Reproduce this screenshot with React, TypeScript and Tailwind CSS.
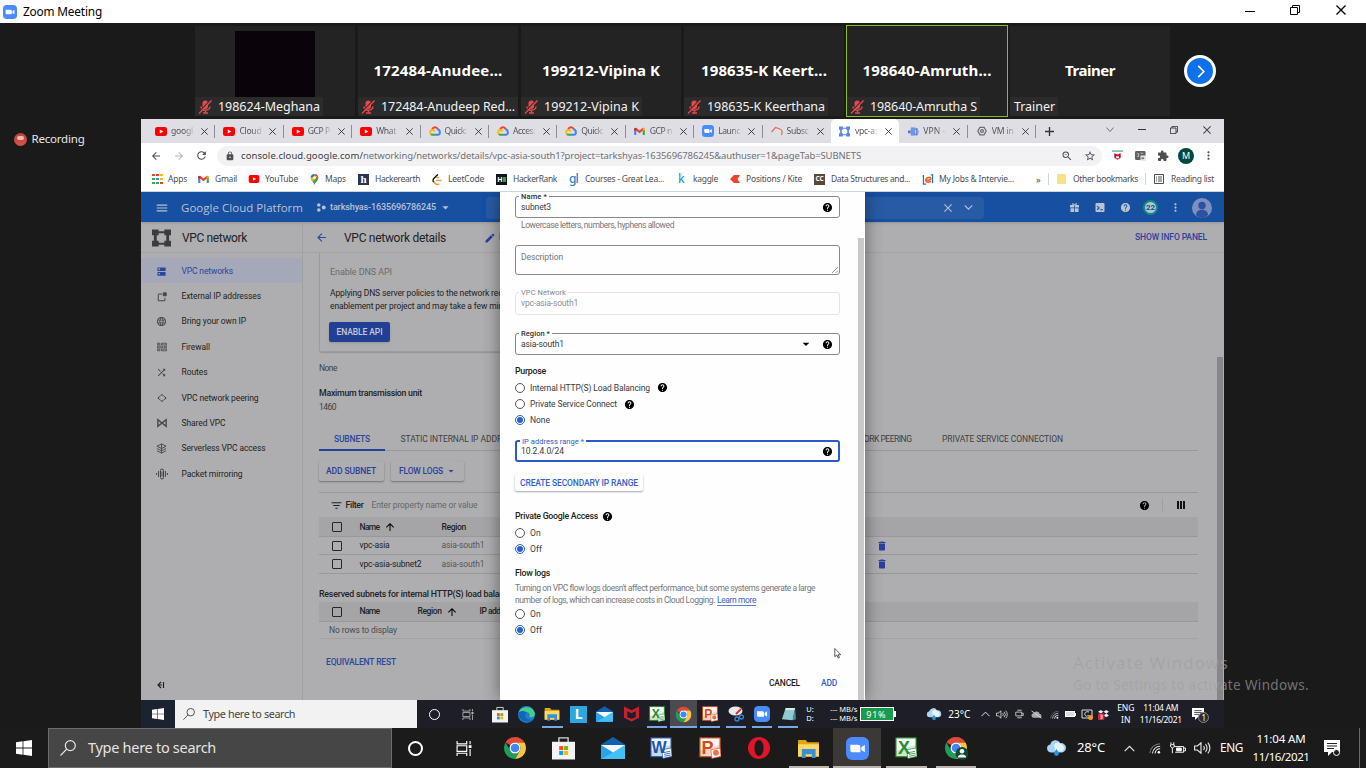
import React, { useLayoutEffect, useRef } from "react";
import {
  MdArrowBack, MdArrowDropDown, MdArrowForward, MdArrowUpward, MdDelete, MdDns, MdEdit,
  MdExtension, MdFilterList, MdHelp, MdLock, MdMenu, MdMoreVert, MdRefresh, MdStarBorder,
  MdZoomOut, MdShuffle, MdLanguage,
} from "react-icons/md";

const UI = "font-['Noto_Sans','Segoe_UI',sans-serif]";

/* One line of text whose tracking is set so that it fills the width of its box. */
function Fit({ className, children }: { className: string; children: string }) {
  const box = useRef<HTMLSpanElement>(null);
  const text = useRef<HTMLSpanElement>(null);
  useLayoutEffect(() => {
    const b = box.current, t = text.current;
    if (!b || !t) return;
    t.style.letterSpacing = "0px";
    const gap = b.getBoundingClientRect().width - t.getBoundingClientRect().width;
    t.style.letterSpacing = `${gap / children.length}px`;
  }, [children]);
  return (
    <span ref={box} className={`inline-block shrink-0 whitespace-nowrap ${className}`}>
      <span ref={text}>{children}</span>
    </span>
  );
}

type P = { className?: string };

const ZoomLogo = ({ className = "" }: P) => (
  <svg viewBox="0 0 24 24" className={`shrink-0 ${className}`}>
    <rect width="24" height="24" rx="6.5" fill="#4a8cff" />
    <path d="M4.5 8h8.2a2.3 2.3 0 0 1 2.3 2.3V16H6.8a2.3 2.3 0 0 1-2.3-2.3zM16 10.6 19.6 8v8L16 13.5z" fill="#fff" />
  </svg>
);
const Chrome = ({ className = "", badge = false }: P & { badge?: boolean }) => (
  <svg viewBox="0 0 48 48" className={`shrink-0 ${className}`}>
    <path d="M24 2a22 22 0 0 1 19.05 11H24a11 11 0 0 0-9.53 5.5L4.95 13A22 22 0 0 1 24 2z" fill="#e0493b" />
    <path d="M43.05 13A22 22 0 0 1 24 46l9.53-16.5A11 11 0 0 0 24 13z" fill="#fdc63a" />
    <path d="M4.95 13A22 22 0 0 0 24 46l9.53-16.5a11 11 0 0 1-19.06 0z" fill="#1f9d58" />
    <circle cx="24" cy="24" r="11" fill="#fff" />
    <circle cx="24" cy="24" r="8.6" fill="#4285f4" />
    {badge && (
      <g>
        <circle cx="36" cy="35" r="13" fill="#0f4a33" />
        <circle cx="36" cy="30.5" r="4.5" fill="#fff" />
        <path d="M27.5 43c0-8 17-8 17 0z" fill="#fff" />
      </g>
    )}
  </svg>
);
const Store = ({ className = "" }: P) => (
  <svg viewBox="0 0 24 24" className={`shrink-0 ${className}`}>
    <path d="M7.2 6V1.4h9.6V6" fill="none" stroke="#d8d8d8" strokeWidth="1.4" />
    <path d="M0 5.5h24V24H0z" fill="#f3f3f3" />
    <path d="M7.5 10h4.2v4.2H7.5z" fill="#f25022" /><path d="M12.6 10h4.2v4.2h-4.2z" fill="#7fba00" />
    <path d="M7.5 15.1h4.2v4.2H7.5z" fill="#00a4ef" /><path d="M12.6 15.1h4.2v4.2h-4.2z" fill="#ffb900" />
  </svg>
);
const Mail = ({ className = "" }: P) => (
  <svg viewBox="0 0 24 22" className={`shrink-0 ${className}`}>
    <path d="M12 0 24 7.5V22H0V7.5z" fill="#0f62ab" />
    <path d="m0 8 12 7.5L24 8v14H0z" fill="#2aa3ee" />
    <path d="M24 8v14H0l12-6.5z" fill="#45c0f5" />
    <path d="M0 8h24l-12 7.5z" fill="#f4f8fb" />
  </svg>
);
const Office = ({ className = "", letter, color }: { className?: string; letter: string; color: "w" | "p" | "x" }) => {
  const ink = color === "w" ? "#1e55a5" : color === "p" ? "#d24a1d" : "#2a8a38";
  const glass = color === "w" ? "#c3daf3" : color === "p" ? "#f9d3c2" : "#cbe9c4";
  return (
    <span className={`relative inline-flex shrink-0 items-center justify-center ${className}`}>
      <svg viewBox="0 0 24 24" className="absolute inset-0 h-full w-full">
        <rect x="1" y="1" width="22" height="20.5" fill={glass} stroke={ink} strokeWidth="1.2" />
        <path d="M2 2h20v7L2 15z" fill="#fff" opacity=".75" />
        <path d="m13 14 10-2 1 9-10 2.500z" fill="#fff" stroke={ink} strokeWidth=".7" />
        {color === "p" ? (
          <circle cx="18.500" cy="17.2" r="3.2" fill="#ec7346" />
        ) : (
          <path d="m15 17 7-1.4M15.300 19l7-1.4M15.600 21l7-1.4" stroke={ink} strokeWidth=".9" />
        )}
      </svg>
      <b className={`relative mr-[18%] leading-none font-['Liberation_Sans',sans-serif] ${color === "w" ? "text-[#1e55a5]" : color === "p" ? "text-[#d24a1d]" : "text-[#2a8a38]"}`}>{letter}</b>
    </span>
  );
};
const Folder = ({ className = "" }: P) => (
  <svg viewBox="0 0 24 20" className={`shrink-0 ${className}`}>
    <path d="M1 1h8l2 2.5h12V19H1z" fill="#e3a21a" />
    <path d="M1 5.5h22V18H1z" fill="#fbd765" />
    <path d="M5 10.5h14.5V20h-4v-4h-6.5v4H5z" fill="#3b8fd4" />
  </svg>
);
const Weather = ({ className = "" }: P) => (
  <svg viewBox="0 0 24 18" className={`shrink-0 ${className}`}>
    <path d="M5.5 14a4.6 4.6 0 0 1-.6-9.1A6.2 6.2 0 0 1 16.400 3.500 5.300 5.300 0 0 1 18.500 14z" fill="#a9d4f5" />
    <path d="M9 5.500A5 5 0 0 1 17 4.500 4.600 4.600 0 0 1 18 13h-7z" fill="#e6f3fc" />
    <path d="M12 10c2 3 2.800 4 2.800 5.200a2.800 2.800 0 0 1-5.600 0C9.200 14 10 13 12 10z" fill="#2f8fe0" />
  </svg>
);
const WinLogo = ({ className = "" }: P) => (
  <svg viewBox="0 0 16 16" className={`shrink-0 ${className}`}>
    <path d="M0 2.200 6.600 1.300V7.600H0zM7.400 1.200 16 0v7.600H7.400zM0 8.400h6.600v6.300L0 13.800zM7.400 8.400H16V16l-8.600-1.200z" fill="#fff" />
  </svg>
);
const Magnifier = ({ className = "" }: P) => (
  <svg viewBox="0 0 16 16" className={`shrink-0 ${className}`} fill="none" stroke="currentColor" strokeWidth="1.200">
    <circle cx="10.300" cy="5.600" r="5" /><path d="M6.700 9.200.5 15.500" />
  </svg>
);
const TaskView = ({ className = "" }: P) => (
  <svg viewBox="0 0 16 16" className={`shrink-0 ${className}`} fill="none" stroke="currentColor" strokeWidth="1.200">
    <path d="M.6 0v3h10.300V0M.6 16v-3h10.300v3M.6 5h10.300v6H.6zM14.500 0v3.500M14.500 8.500V16" />
    <path d="M13 4.500h3v3h-3z" fill="currentColor" stroke="none" />
  </svg>
);
const ChevUp = ({ className = "" }: P) => (
  <svg viewBox="0 0 12 8" className={`shrink-0 ${className}`} fill="none" stroke="#e8e8e8" strokeWidth="1.300"><path d="m.5 7L6 1.500 11.500 7" /></svg>
);
const Wifi = ({ className = "" }: P) => (
  <svg viewBox="0 0 14 14" className={`shrink-0 ${className}`} fill="none" strokeWidth="1.200">
    <path d="M1 13A12 12 0 0 1 13 2" stroke="#777" /><path d="M4 13.300A9 9 0 0 1 13 5" stroke="#ddd" />
    <path d="M7 13.500A6 6 0 0 1 13 8" stroke="#fff" /><circle cx="11.500" cy="12" r="1.500" fill="#fff" />
  </svg>
);
const Speaker = ({ className = "" }: P) => (
  <svg viewBox="0 0 17 12" className={`shrink-0 ${className}`} fill="none" stroke="#eee" strokeWidth="1.100">
    <path d="M.6 4h2.800L7 .8v10.400L3.400 8H.6zM9.500 4a3 3 0 0 1 0 4M11.500 2.200a5.500 5.500 0 0 1 0 7.600M13.800.6a8 8 0 0 1 0 10.800" />
  </svg>
);
const Note = ({ className = "" }: P) => (
  <svg viewBox="0 0 16 16" className={`shrink-0 ${className}`}>
    <path d="M0 0h16v12H8l-4 4v-4H0z" fill="#fff" /><path d="M3 3.500h10M3 6h10M3 8.500h7" stroke="#222" strokeWidth="1" />
  </svg>
);
const YouTube = ({ className = "" }: P) => (
  <svg viewBox="0 0 12 9" className={`shrink-0 ${className}`}>
    <rect width="12" height="9" rx="2.200" fill="#f00" /><path d="m4.800 2.500 3.500 2-3.500 2z" fill="#fff" />
  </svg>
);
const Gmail = ({ className = "" }: P) => (
  <svg viewBox="0 0 12 9" className={`shrink-0 ${className}`} fill="none" strokeWidth="2.400">
    <path d="M1.200 9V2" stroke="#4285f4" /><path d="M10.800 9V2" stroke="#34a853" />
    <path d="m1.200 1.600 4.800 3.900 4.800-3.900" stroke="#ea4335" />
    <path d="M10.800 1.400v2.500" stroke="#fbbc04" /><path d="M1.200 1.400v2.500" stroke="#c5221f" />
  </svg>
);
const GCloud = ({ className = "" }: P) => (
  <svg viewBox="0 0 24 20" className={`shrink-0 ${className}`} fill="none" strokeWidth="4">
    <path d="M6 7.500C8 1.500 15 1 17.500 6.500" stroke="#ea4335" />
    <path d="M17 6.500C23 8 23.500 17 17.500 17.500H12" stroke="#4285f4" />
    <path d="M12 17.500H7c-1.500 0-2.500-.5-3.500-1.500" stroke="#34a853" />
    <path d="M4 16.500C.5 12.500 3 8 6.500 8s4 2 5 3" stroke="#fbbc05" />
  </svg>
);
const VpcIcon = ({ className = "" }: P) => (
  <svg viewBox="0 0 20 20" className={`shrink-0 ${className}`} fill="currentColor">
    <path d="M0 1h7v2h6V1h7v6h-2v6h2v6h-7v-2H7v2H0v-6h2V7H0zm7 4v2H5v6h2v2h6v-2h2V7h-2V5z" fillRule="evenodd" />
  </svg>
);
const Mic = () => (
  <svg viewBox="0 0 14 14" className="h-[14px] w-[14px] shrink-0" fill="none">
    <rect x="4.500" y=".500" width="5.500" height="8.500" rx="2.700" fill="#e5484d" />
    <path d="M3 6.500c0 5 9 5 9 0M7.500 10v3M5 13h5" stroke="#e5484d" strokeWidth="1.400" />
    <path d="M12.800-.200.300 12.800" stroke="#2b2b2b" strokeWidth="1.200" /><path d="M13.500.5 1 13.500" stroke="#e5484d" strokeWidth="1.400" />
  </svg>
);
const X = ({ className = "" }: P) => (
  <svg viewBox="0 0 10 10" className={`shrink-0 ${className}`} stroke="currentColor" fill="none"><path d="m.5.5 9 9m0-9-9 9" strokeWidth="1.300" /></svg>
);
const Restore = ({ className = "" }: P) => (
  <svg viewBox="0 0 10 10" className={`shrink-0 ${className}`} stroke="currentColor" fill="none"><path d="M.5 2.500h7v7h-7zM2.500 2.500v-2h7v7h-2" /></svg>
);
const Help = ({ className = "" }: P) => <MdHelp className={`h-[11px] w-[11px] shrink-0 ${className}`} />;

/* ---------- meeting gallery ---------- */
function Tile({ name, nameW, label, labelW, muted = true, active = false, video = false }: {
  name?: string; nameW?: string; label: string; labelW: string; muted?: boolean; active?: boolean; video?: boolean;
}) {
  return (
    <div className={`flex shrink-0 flex-col items-center bg-[#232323] ${active ? "-mx-px h-[92px] w-[162px] border border-[#8abb20]" : "my-px h-[90px] w-[160px]"}`}>
      {video && <div className="mt-[5px] h-[66px] w-[80px] shrink-0 bg-[#0a040a]" />}
      {name && <div className="flex h-[70px] shrink-0 items-end leading-[52px]"><Fit className={`text-[15px] font-bold text-white ${nameW}`}>{name}</Fit></div>}
      <div className={`mt-auto flex h-[19px] items-center self-start bg-[#2b2b2b] pr-[3px] ${muted ? "pl-[3px]" : "pl-[4px]"}`}>
        {muted && <span className="mr-[6px] flex"><Mic /></span>}
        <Fit className={`text-[12.5px] leading-[19px] text-[#f2f2f2] ${labelW}`}>{label}</Fit>
      </div>
    </div>
  );
}

/* ---------- browser ---------- */
function Tab({ icon, title, w = "w-[22px]", active = false, sep = true }: { icon: React.ReactNode; title: string; w?: string; active?: boolean; sep?: boolean }) {
  return (
    <div className={`flex h-[24px] w-[68.4px] shrink-0 items-center pl-[8px] ${active ? "rounded-t-[5px] bg-white" : ""}`}>
      <span className="flex w-[12px] shrink-0 justify-center">{icon}</span>
      <span className="ml-[4px] flex w-[23px] shrink-0 bg-gradient-to-r from-[#4b4e53] from-55% to-[#c9c9ce] bg-clip-text text-transparent"><Fit className={`text-[8.600px] leading-[14px] ${w}`}>{title}</Fit></span>
      <X className="ml-[7px] h-[7px] w-[7px] text-[#333]" />
      <span className={`ml-auto h-[13px] w-px ${sep ? "bg-[#8d8d93]" : ""}`} />
    </div>
  );
}
const Bookmark = ({ icon, text, w, iw = "w-[16px]", ml }: { icon: React.ReactNode; text: string; w: string; iw?: string; ml: string }) => (
  <div className={`flex shrink-0 items-center ${ml}`}>
    <span className={`flex shrink-0 items-center ${iw}`}>{icon}</span>
    <Fit className={`text-[8.5px] text-[#4b4e53] ${w}`}>{text}</Fit>
  </div>
);

function Browser() {
  return (
    <div className={UI}>
      <div className="flex h-[24px] items-center bg-[#dfdee4] pl-[6px]">
        <Tab icon={<YouTube className="h-[9px] w-[12px]" />} title="googl" />
        <Tab icon={<YouTube className="h-[9px] w-[12px]" />} title="Cloud" />
        <Tab icon={<YouTube className="h-[9px] w-[12px]" />} title="GCP P" />
        <Tab icon={<YouTube className="h-[9px] w-[12px]" />} title="What" w="w-[20px]" />
        <Tab icon={<GCloud className="h-[10px] w-[12px]" />} title="Quick:" />
        <Tab icon={<GCloud className="h-[10px] w-[12px]" />} title="Acces:" />
        <Tab icon={<GCloud className="h-[10px] w-[12px]" />} title="Quick:" />
        <Tab icon={<Gmail className="h-[8px] w-[11px]" />} title="GCP n" />
        <Tab icon={<ZoomLogo className="h-[12px] w-[12px]" />} title="Launc" />
        <Tab sep={false} icon={<svg viewBox="0 0 12 10" className="h-[10px] w-[12px]" fill="none" stroke="#ee6a50" strokeWidth="1.200"><path d="M.5 6 4.500 1.500 9 3c2.500 1 2.500 3.500 1.500 6" /></svg>} title="Subsc" />
        <Tab active sep={false} icon={<VpcIcon className="h-[11px] w-[11px] text-[#5b86e5]" />} title="vpc-a:" />
        <Tab icon={<svg viewBox="0 0 12 12" className="h-[11px] w-[11px]"><path d="M3 1.500h5v9H3z" fill="#6f95e8" /><path d="M0 5h3v3H0zM8 2.500h2.500V10H8V8.500h1V4H8z" fill="#4a78d8" /><path d="M10.500 5H12v3h-1.500z" fill="#8fb0f0" /></svg>} title="VPN -" />
        <Tab icon={<svg viewBox="0 0 12 12" className="h-[10px] w-[10px]" fill="none" stroke="#6a6d72" strokeWidth="1.500"><path d="M3.500 1.500h5L11 6l-2.500 4.500h-5L1 6z" /><circle cx="6" cy="6" r="1.700" /></svg>} title="VM in" />
        <svg viewBox="0 0 10 10" className="ml-[9px] h-[9px] w-[9px] shrink-0" stroke="#333" strokeWidth="1.500"><path d="M5 0v10M0 5h10" /></svg>
        <svg viewBox="0 0 10 6" className="mb-[4px] ml-[52px] h-[5px] w-[8px] shrink-0" stroke="#555" fill="none"><path d="m.5.5 4.500 5 4.500-5" /></svg>
        <span className="mb-[3px] ml-[24px] h-px w-[8px] shrink-0 bg-[#333]" />
        <Restore className="mb-[3px] ml-[24px] h-[8px] w-[8px] text-[#222]" />
        <X className="mb-[3px] ml-[25px] h-[8px] w-[8px] text-[#444]" />
      </div>
      <div className="flex h-[25px] items-center bg-white pl-[9px] text-[#4b4e53]">
        <MdArrowBack className="h-[12px] w-[12px] shrink-0" />
        <MdArrowForward className="ml-[11px] h-[12px] w-[12px] shrink-0 text-[#b4b6b9]" />
        <MdRefresh className="ml-[10px] h-[13px] w-[13px] shrink-0" />
        <div className="ml-[9px] flex h-[20px] w-[885px] shrink-0 items-center rounded-full bg-[#f2f2f5] pt-px pl-[8px]">
          <MdLock className="h-[10px] w-[10px] shrink-0" />
          <Fit className="ml-[6px] w-[122px] text-[9.5px] text-[#3b3d41]">console.cloud.google.com/</Fit>
          <Fit className="w-[498px] text-[9.5px] text-[#6e7176]">networking/networks/details/vpc-asia-south1?project=tarkshyas-1635696786245&authuser=1&pageTab=SUBNETS</Fit>
          <MdZoomOut className="ml-[200px] h-[12px] w-[12px] shrink-0" />
          <MdStarBorder className="ml-[11px] h-[12px] w-[12px] shrink-0" />
        </div>
        <svg viewBox="0 0 12 12" className="ml-[10px] h-[11px] w-[11px] shrink-0"><path d="M0 .5h12v1.300H0z" fill="#3aa592" /><path d="M2.500 3.500 6 5l3.500-1.500v5L6 10.500l-3.500-2z" fill="#c8102e" /><path d="M4.500 6.500 6 7l1.500-.5V9h-3z" fill="#fff" /></svg>
        <svg viewBox="0 0 12 12" className="ml-[12px] h-[11px] w-[11px] shrink-0"><rect x="0" y="1" width="11.500" height="10" rx="1.500" fill="#5c5f63" /><path d="M2 4h2v3H2M6 3.500h3" stroke="#ddd" strokeWidth=".8" fill="none" /><path d="M6 6h6v6H6z" fill="#e8e8ea" /><path d="M7 8h3v2H7z" fill="#777" /></svg>
        <MdExtension className="ml-[11px] h-[12px] w-[12px] shrink-0" />
        <span className="ml-[9px] flex h-[16px] w-[16px] shrink-0 items-center justify-center rounded-full bg-[#00493c] text-[9px] leading-none text-white">M</span>
        <MdMoreVert className="ml-[8px] h-[13px] w-[13px] shrink-0" />
      </div>
      <div className="flex h-[24px] items-center border-b border-[#ccd6e2] bg-white pb-px">
        <Bookmark ml="ml-[11px]" text="Apps" w="w-[19px]" icon={
          <span className="grid grid-cols-3 gap-[1.500px]">
            <i className="h-[2.500px] w-[2.500px] bg-[#e94335]" /><i className="h-[2.500px] w-[2.500px] bg-[#e94335]" /><i className="h-[2.500px] w-[2.500px] bg-[#fbbc05]" />
            <i className="h-[2.500px] w-[2.500px] bg-[#34a853]" /><i className="h-[2.500px] w-[2.500px] bg-[#4285f4]" /><i className="h-[2.500px] w-[2.500px] bg-[#fbbc05]" />
            <i className="h-[2.500px] w-[2.500px] bg-[#34a853]" /><i className="h-[2.500px] w-[2.500px] bg-[#34a853]" /><i className="h-[2.500px] w-[2.500px] bg-[#e94335]" />
          </span>} />
        <Bookmark ml="ml-[11px]" text="Gmail" w="w-[22px]" iw="w-[17px]" icon={<Gmail className="h-[8px] w-[11px]" />} />
        <Bookmark ml="ml-[11px]" text="YouTube" w="w-[33px]" iw="w-[17px]" icon={<YouTube className="h-[8px] w-[12px]" />} />
        <Bookmark ml="ml-[12px]" text="Maps" w="w-[21px]" iw="w-[15px]" icon={<svg viewBox="0 0 10 13" className="h-[11px] w-[9px]"><path d="M5 13C4.500 9.500.5 8 .5 4.500A4.500 4.500 0 0 1 5 0z" fill="#1a73e8" /><path d="M5 13C5.500 9.500 9.500 8 9.500 4.500A4.500 4.500 0 0 0 5 0z" fill="#ea4335" /><path d="m9 2-6 7C1.500 7.500.5 6 .5 4.500z" fill="#fbbc04" /><path d="M9.300 3.500C9.500 8 5.500 9 5 13 4.700 11 3.900 10 3 9z" fill="#34a853" /><circle cx="5" cy="4.500" r="1.700" fill="#fff" /></svg>} />
        <Bookmark ml="ml-[12px]" text="Hackerearth" w="w-[45px]" iw="w-[17px]" icon={<span className="flex h-[11px] w-[11px] items-center justify-center bg-[#2c3454] font-['Liberation_Serif',serif] text-[11px] leading-none font-bold text-white">h</span>} />
        <Bookmark ml="ml-[12px]" text="LeetCode" w="w-[36px]" iw="w-[16px]" icon={<svg viewBox="0 0 10 12" className="h-[11px] w-[10px]" fill="none" strokeWidth="1.600"><path d="M6 .5 1.500 5C.5 6 .5 8 1.500 9" stroke="#111" /><path d="M1.500 8.500 4 11c1 .8 2.500.8 3.500-.5" stroke="#f0a020" /><path d="M4 7h6" stroke="#aaa" /><path d="M4 3.500 7.500 4" stroke="#f0a020" /></svg>} />
        <Bookmark ml="ml-[12px]" text="HackerRank" w="w-[44px]" iw="w-[17px]" icon={<span className="flex h-[11px] w-[11px] items-center justify-center bg-[#10151c] text-[7px] leading-none font-bold text-white">H<i className="h-[5px] w-[3px] bg-[#1ba94c]" /></span>} />
        <Bookmark ml="ml-[12px]" text="Courses - Great Lea..." w="w-[79px]" iw="w-[16px]" icon={<span className="text-[12px] leading-none font-medium tracking-[-1px] text-[#2089c4]">gl</span>} />
        <Bookmark ml="ml-[14px]" text="kaggle" w="w-[25px]" iw="w-[15px]" icon={<span className="text-[12px] leading-none font-medium text-[#20a0d8]">k</span>} />
        <Bookmark ml="ml-[12px]" text="Positions / Kite" w="w-[56px]" iw="w-[16px]" icon={<svg viewBox="0 0 10 8" className="h-[8px] w-[10px]"><path d="M0 4 4 0h6L7.500 4 10 8H4z" fill="#f0402c" /></svg>} />
        <Bookmark ml="ml-[12px]" text="Data Structures and..." w="w-[79px]" iw="w-[17px]" icon={<span className="flex h-[11px] w-[11px] items-center justify-center bg-[#5b4638] text-[6.500px] leading-none font-bold text-white">CC</span>} />
        <Bookmark ml="ml-[12px]" text="My Jobs & Intervie..." w="w-[75px]" iw="w-[17px]" icon={<svg viewBox="0 0 12 12" className="h-[11px] w-[12px]" fill="none"><path d="M4 11H1V1M9 1h2v9" stroke="#1b75bb" strokeWidth="1.300" /><path d="M3.500 7c4 0 6-1 5.500-2.500S3 4 3.500 7s4 2 6 1" stroke="#f0652a" strokeWidth="1.800" /></svg>} />
        <span className="ml-[22px] w-[12px] shrink-0 text-[9px] leading-none text-[#444]">»</span>
        <span className="h-[12px] w-px shrink-0 bg-[#d4d4d6]" />
        <Bookmark ml="ml-[8px]" text="Other bookmarks" w="w-[65px]" iw="w-[16px]" icon={<span className="h-[10px] w-[9px] rounded-[1px] bg-[#fbe08a]" />} />
        <span className="ml-[7px] h-[12px] w-px shrink-0 bg-[#d4d4d6]" />
        <Bookmark ml="ml-[8px]" text="Reading list" w="w-[43px]" iw="w-[17px]" icon={<svg viewBox="0 0 10 10" className="h-[10px] w-[10px]" stroke="#4b4e53" fill="none"><path d="M.5.500h9v9h-9zM4 3h4M4 5h4M4 7h4M2 3h1M2 5h1M2 7h1" /></svg>} />
      </div>
    </div>
  );
}

/* ---------- cloud console ---------- */
const g = "h-[11px] w-[11px]";
const line = { fill: "none", stroke: "currentColor", strokeWidth: 1.2 };
const NAV: { text: string; w: string; icon: React.ReactNode }[] = [
  { text: "VPC networks", w: "w-[51.500px]", icon: <MdDns className={g} /> },
  { text: "External IP addresses", w: "w-[79.500px]", icon: <svg viewBox="0 0 12 12" className="h-[10px] w-[10px]" {...line}><path d="M6 2.500H1.500v8h8V7" /><path d="M7.500 1h3.500v3.500H7.500z" fill="currentColor" /></svg> },
  { text: "Bring your own IP", w: "w-[64.500px]", icon: <MdLanguage className={g} /> },
  { text: "Firewall", w: "w-[28.500px]", icon: <svg viewBox="0 0 12 12" className="h-[10px] w-[10px]" {...line} strokeWidth={1}><path d="M.5 1.500h3v2h-3zM5.500 1.500h6v2h-6zM.5 5h6v2h-6zM8.500 5h3v2h-3zM.5 8.500h3v2h-3zM5.500 8.500h6v2h-6z" /></svg> },
  { text: "Routes", w: "w-[26px]", icon: <MdShuffle className={g} /> },
  { text: "VPC network peering", w: "w-[77px]", icon: <svg viewBox="0 0 12 12" className="h-[10px] w-[10px]" {...line}><path d="m4 4 2-2.500L8 4M4 8l2 2.500L8 8M3.500 4 1 6l2.500 2M8.500 4 11 6 8.500 8" /></svg> },
  { text: "Shared VPC", w: "w-[44px]", icon: <svg viewBox="0 0 12 12" className="h-[10px] w-[10px]" {...line} strokeWidth={1.6}><path d="M1 2v8l10-8v8z" /></svg> },
  { text: "Serverless VPC access", w: "w-[84px]", icon: <svg viewBox="0 0 12 12" className="h-[11px] w-[11px]" {...line} strokeWidth={1}><path d="m6 1 5 2.500L6 6 1 3.500zM1 6l5 2.500L11 6M1 8.500 6 11l5-2.500M6 1v10" /></svg> },
  { text: "Packet mirroring", w: "w-[61px]", icon: <svg viewBox="0 0 12 12" className="h-[12px] w-[12px]" {...line} strokeWidth={1}><path d="M.6 5v2M2.600 3v6M9.400 3v6M11.400 5v2M6 3.500v5" /><rect x="4.500" y="1" width="3" height="10" rx="1.500" /></svg> },
];
const Check = () => <span className="h-[10px] w-[10px] shrink-0 rounded-[1px] border-[1.500px] border-[#262628]" />;

function Console() {
  return (
    <div className="relative h-[508px] overflow-hidden bg-[#aeaeb0] font-['Roboto',sans-serif] text-[8.500px] text-[#222225]">
      <header className="flex h-[30px] items-center bg-[#174fa1] pt-px pl-[14px] text-[#b9c3d3] shadow">
        <MdMenu className="h-[14px] w-[14px] shrink-0" />
        <Fit className="ml-[12px] w-[122px] font-['Open_Sans',sans-serif] text-[11.500px] font-normal">Google Cloud Platform</Fit>
        <svg viewBox="0 0 10 10" className="ml-[14px] h-[9px] w-[9px] shrink-0" fill="currentColor"><circle cx="2" cy="2.300" r="2" /><circle cx="2" cy="7.700" r="2" /><circle cx="7.500" cy="5" r="2.200" /></svg>
        <Fit className="ml-[4px] w-[106px] text-[9px] font-medium">tarkshyas-1635696786245</Fit>
        <MdArrowDropDown className="ml-[2px] h-[15px] w-[15px] shrink-0" />
        <div className="ml-[33px] flex h-[22px] w-[498px] shrink-0 items-center justify-end rounded-[4px] bg-[#285ba5] pr-[11px]">
          <X className="h-[8px] w-[8px]" />
          <svg viewBox="0 0 10 6" className="ml-[12px] h-[5px] w-[9px]" stroke="currentColor" strokeWidth="1.300" fill="none"><path d="m.5.500 4.500 4.500L9.500.5" /></svg>
        </div>
        <svg viewBox="0 0 10 10" className="ml-[86px] h-[9px] w-[9px] shrink-0" fill="currentColor"><path d="M0 2.200h4.600V5H0zM5.400 2.200H10V5H5.400zM.5 5.700h4.100V10H.5zM5.400 5.700h4.100V10H5.400z" /><path d="M5 2.200C2 2.200 2 .500 3 .500S5 2.200 5 2.200 6 .500 7 .500s1 1.700-2 1.700" fill="none" stroke="currentColor" /></svg>
        <svg viewBox="0 0 10 10" className="ml-[16px] h-[9px] w-[10px] shrink-0"><rect width="10" height="10" rx="1" fill="currentColor" /><path d="M1.800 3.500 4 5.500l-2.200 2M5.300 7.500h3" stroke="#174fa1" strokeWidth="1.200" fill="none" /></svg>
        <Help className="ml-[15px]" />
        <span className="ml-[12px] flex h-[15px] w-[15px] shrink-0 items-center justify-center rounded-full border-2 border-[#0d8f7c] bg-[#b4c6cf] text-[8px] leading-none font-bold text-[#174fa1]">22</span>
        <MdMoreVert className="ml-[11px] h-[13px] w-[13px] shrink-0" />
        <svg viewBox="0 0 20 20" className="ml-[10px] h-[20px] w-[20px] shrink-0"><circle cx="10" cy="10" r="10" fill="#7c8fbf" /><circle cx="10" cy="7.500" r="3.700" fill="#2d50a0" /><path d="M4 17c0-7 12-7 12 0-3.500 4-8.500 4-12 0z" fill="#2d50a0" /></svg>
      </header>

      <div className="flex h-[478px]">
        <nav className="flex w-[162px] shrink-0 flex-col border-r border-[#a0a0a3]">
          <div className="flex h-[31px] shrink-0 items-center border-b border-[#a2a2a4] pt-px pl-[11px]">
            <VpcIcon className="h-[20px] w-[19px] text-[#3c3c40]" />
            <Fit className="ml-[11px] w-[65px] text-[12px]">VPC network</Fit>
          </div>
          <div className="mt-[5px]">
            {NAV.map((n, i) => (
              <div key={n.text} className={`flex h-[25.350px] items-center pt-px pl-[13.500px] ${i === 0 ? "bg-[#a5a8b8] text-[#2b479c]" : "text-[#1f1f22]"}`}>
                <span className={`flex w-[14px] shrink-0 justify-center ${i === 0 ? "" : "text-[#47474b]"}`}>{n.icon}</span>
                <Fit className={`ml-[13px] text-[8.500px] ${n.w}`}>{n.text}</Fit>
              </div>
            ))}
          </div>
          <svg viewBox="0 0 8 8" className="mt-auto mb-[11px] ml-[16px] h-[8px] w-[8px] shrink-0" {...line}><path d="M4 1 1 4l3 3M1 4h4M6.500 1v6" /></svg>
        </nav>

        <main className="flex min-w-0 grow flex-col">
          <div className="flex h-[31px] shrink-0 items-center border-b border-[#a2a2a4] pt-px pl-[12px]">
            <MdArrowBack className="h-[13px] w-[13px] shrink-0 text-[#2b479c]" />
            <Fit className="ml-[16px] w-[102px] text-[12px]">VPC network details</Fit>
            <MdEdit className="ml-[38px] h-[12px] w-[12px] shrink-0 text-[#2b3f9c]" />
            <span className="ml-[3px] text-[9px] font-medium text-[#2b479c]">EDIT</span>
            <Fit className="mr-[17px] ml-auto w-[72px] font-medium text-[#2f419c]">SHOW INFO PANEL</Fit>
          </div>
          <div className="flex grow">
            <div className="ml-[16px] flex w-[879px] shrink-0 flex-col">
              <section className="flex h-[99px] w-[400px] shrink-0 flex-col items-start rounded-b-[3px] border-x border-b border-[#9c9c9f] pt-[12px] pl-[10px] shadow-[0_1px_1px_rgba(0,0,0,.15)]">
                <Fit className="h-[13px] w-[62px] text-[9px] leading-[14px] text-[#6a6a6e]">Enable DNS API</Fit>
                <div className="mt-[9px] leading-[12.500px]">
                  <Fit className="w-[209px]">Applying DNS server policies to the network requires DNS</Fit><br />
                  <Fit className="w-[191px]">enablement per project and may take a few minutes.</Fit>
                </div>
                <button className="-ml-px mt-[10px] flex h-[20px] w-[61px] items-center justify-center rounded-[2px] bg-[#213f94] shadow"><Fit className="w-[46px] font-medium text-[#c3c9da]">ENABLE API</Fit></button>
              </section>
              <Fit className="mt-[9px] h-[13px] w-[18px] leading-[15px] text-[#3f3f43]">None</Fit>
              <Fit className="mt-[13px] h-[13px] w-[103px] text-[8.800px] leading-[13px] font-medium">Maximum transmission unit</Fit>
              <Fit className="h-[14px] w-[17px] leading-[15px] text-[#3f3f43]">1460</Fit>
              <div className="mt-[13px] flex h-[24px] shrink-0 items-center border-b border-[#98989b] text-[#3f3f43]">
                <div className="-mb-px flex h-[24px] w-[66px] shrink-0 items-center justify-center border-b-2 border-[#23429b] pt-[2px]"><Fit className="w-[36px] font-medium text-[#2b479c]">SUBNETS</Fit></div>
                <Fit className="mt-px ml-[15.500px] w-[126px]">STATIC INTERNAL IP ADDRESSES</Fit>
                <span className="ml-[30px] w-[224px] shrink-0">FIREWALL RULES</span>
                <Fit className="mt-px ml-[45px] w-[86px]">VPC NETWORK PEERING</Fit>
                <Fit className="mt-px ml-[30.500px] w-[121px]">PRIVATE SERVICE CONNECTION</Fit>
              </div>
              <div className="mt-[10px] flex h-[20px] shrink-0 gap-[7px] font-medium text-[#2b3f9c]">
                <button className="flex w-[65px] items-center pl-[7px] rounded-[2px] shadow-[0_1px_2px_rgba(0,0,0,.35)]"><Fit className="w-[50px]">ADD SUBNET</Fit></button>
                <button className="flex w-[73px] items-center rounded-[2px] pl-[8px] shadow-[0_1px_2px_rgba(0,0,0,.35)]"><Fit className="w-[44px]">FLOW LOGS</Fit><MdArrowDropDown className="ml-[2px] h-[12px] w-[12px]" /></button>
              </div>
              <div className="mt-[11px] flex h-[25px] shrink-0 items-center border-t border-[#98989b] pl-[11px]">
                <MdFilterList className="h-[13px] w-[13px] shrink-0" />
                <Fit className="ml-[2.500px] w-[18px] text-[8.800px] leading-[14px] font-medium">Filter</Fit>
                <Fit className="ml-[8px] w-[106px] text-[#67676b]">Enter property name or value</Fit>
                <Help className="ml-auto text-black" />
                <span className="ml-[12px] h-[14px] w-px bg-[#a0a0a3]" />
                <svg viewBox="0 0 8 8" className="mr-[13px] ml-[14px] h-[8px] w-[8px]" fill="#111"><path d="M0 0h2v8H0zM3 0h2v8H3zM6 0h2v8H6z" /></svg>
              </div>
              <div className="flex h-[20px] shrink-0 items-center border-b border-[#98989b] bg-[#a5a5a8] pt-px pl-[12.500px] font-medium">
                <Check /><Fit className="ml-[18px] w-[20px]">Name</Fit><MdArrowUpward className="ml-[4px] h-[12px] w-[12px] text-black" /><Fit className="ml-[46px] w-[24.500px]">Region</Fit>
              </div>
              <div className="flex h-[18px] shrink-0 items-center border-b border-[#98989b] pl-[12.500px]">
                <Check /><Fit className="ml-[18px] w-[30px]">vpc-asia</Fit><Fit className="ml-[52px] w-[43px] text-[#56565a]">asia-south1</Fit>
                <MdDelete className="ml-[391px] h-[12px] w-[12px] text-[#2b3f9c]" />
              </div>
              <div className="flex h-[19px] shrink-0 items-center border-b border-[#98989b] pl-[12.500px]">
                <Check /><Fit className="ml-[18px] w-[62px]">vpc-asia-subnet2</Fit><Fit className="ml-[20px] w-[43px] text-[#56565a]">asia-south1</Fit>
                <MdDelete className="ml-[391px] h-[12px] w-[12px] text-[#2b3f9c]" />
              </div>
              <Fit className="mt-[13px] h-[13px] w-[201px] text-[8.800px] leading-[14px] font-medium">Reserved subnets for internal HTTP(S) load balancing</Fit>
              <div className="mt-[2px] flex h-[20px] shrink-0 items-center border-b border-[#98989b] bg-[#a5a5a8] pl-[12.500px] font-medium">
                <Check /><Fit className="ml-[18px] w-[20px]">Name</Fit><Fit className="ml-[38px] w-[24px]">Region</Fit><MdArrowUpward className="ml-[4px] h-[12px] w-[12px] text-black" /><Fit className="ml-[22px] w-[60px]">IP address ranges</Fit>
              </div>
              <div className="flex h-[17px] shrink-0 items-center border-b border-[#a2a2a4] pl-[10px]"><Fit className="w-[68px] text-[#4a4a4e]">No rows to display</Fit></div>
              <Fit className="mt-[16px] ml-[7px] h-[14px] w-[70px] leading-[14px] font-medium text-[#2b479c]">EQUIVALENT REST</Fit>
            </div>
            <div className="mt-[104px] mr-px ml-auto w-[6px] bg-[#88868a]" />
          </div>
        </main>
      </div>

      <SubnetDialog />
    </div>
  );
}

function Field({ label, labelW, className, tone, children }: { label: string; labelW: string; className: string; tone: string; children: React.ReactNode }) {
  return (
    <div className={`relative flex w-[325px] shrink-0 items-center rounded-[3px] border pl-[5px] leading-[9px] ${className}`}>
      <span className={`absolute -top-[5.500px] left-[3px] flex h-[9px] items-center bg-[#fefefe] px-[2px] text-[7.500px] leading-[9px] ${tone}`}><Fit className={labelW}>{label}</Fit></span>
      {children}
    </div>
  );
}
function Radio({ text, w, on = false, help = false, className = "h-[16px]" }: { text: string; w: string; on?: boolean; help?: boolean; className?: string }) {
  return (
    <div className={`flex shrink-0 items-center leading-[10px] ${className}`}>
      <span className={`flex h-[10px] w-[10px] shrink-0 items-center justify-center rounded-full border ${on ? "border-[#2a5fd0]" : "border-[#55585c]"}`}>
        {on && <i className="h-[6px] w-[6px] rounded-full bg-[#2a5fd0]" />}
      </span>
      <Fit className={`ml-[5px] ${w}`}>{text}</Fit>
      {help && <Help className="ml-[7px] text-black" />}
    </div>
  );
}

function SubnetDialog() {
  return (
    <div className="absolute top-0 left-[359px] flex h-[508px] w-[365px] bg-[#fefefe] text-[#3a3c40] shadow-[0_0_16px_rgba(0,0,0,.45)]">
      <div className="ml-[15px] flex w-[325px] shrink-0 flex-col pt-[4px]">
        <Field label="Name *" labelW="w-[26px]" tone="font-medium text-[#2d2f33]" className="h-[22px] border-[#85888c]">
          <Fit className="w-[30px]">subnet3</Fit><Help className="mr-[6px] ml-auto text-black" />
        </Field>
        <Fit className="ml-[6px] h-[14px] w-[153px] leading-[14px] text-[#75787c]">Lowercase letters, numbers, hyphens allowed</Fit>
        <div className="mt-[13px] flex h-[30px] w-[325px] shrink-0 justify-between rounded-[3px] border border-[#85888c] pt-[4px] pl-[5px]">
          <Fit className="w-[42px] leading-[14px] text-[#75787c]">Description</Fit>
          <svg viewBox="0 0 6 6" className="mr-px mb-px h-[6px] w-[6px] self-end" stroke="#777" strokeWidth=".8"><path d="M0 6 6 0M3.500 6 6 3.500" /></svg>
        </div>
        <Field label="VPC Network" labelW="w-[45px]" tone="text-[#85888c]" className="mt-[17px] h-[23px] border-[#e2e3e5]">
          <Fit className="w-[57px] text-[#8d9094]">vpc-asia-south1</Fit>
        </Field>
        <Field label="Region *" labelW="w-[29px]" tone="font-medium text-[#2d2f33]" className="mt-[18px] h-[22px] border-[#85888c]">
          <Fit className="w-[43px]">asia-south1</Fit><MdArrowDropDown className="mr-[8px] ml-auto h-[16px] w-[16px] text-black" /><Help className="mr-[6px] text-black" />
        </Field>
        <Fit className="mt-[8px] h-[16px] w-[31px] text-[8.800px] leading-[16px] font-medium text-[#1d1e21]">Purpose</Fit>
        <Radio text="Internal HTTP(S) Load Balancing" w="w-[120px]" help className="h-[17px]" />
        <Radio text="Private Service Connect" w="w-[87px]" help />
        <Radio text="None" w="w-[20px]" on />
        <Field label="IP address range *" labelW="w-[62px]" tone="text-[#2f59c4]" className="mt-[12px] h-[22px] border-2 border-[#2a5bc8] !pl-[4px]">
          <Fit className="w-[43px]">10.2.4.0/24</Fit><Help className="mr-[5px] ml-auto text-black" />
        </Field>
        <button className="mt-[12px] flex h-[17px] w-[128px] shrink-0 items-center rounded-[2px] pt-px pl-[5px] shadow-[0_1px_2px_rgba(0,0,0,.35)]"><Fit className="w-[118px] font-medium text-[#3361cd]">CREATE SECONDARY IP RANGE</Fit></button>
        <div className="mt-[17px] flex h-[17px] shrink-0 items-center"><Fit className="w-[83px] text-[8.800px] font-medium text-[#1d1e21]">Private Google Access</Fit><Help className="ml-[4px] text-black" /></div>
        <Radio text="On" w="w-[11px]" />
        <Radio text="Off" w="w-[12px]" on />
        <Fit className="mt-[8px] h-[16px] w-[35px] text-[8.800px] leading-[16px] font-medium text-[#1d1e21]">Flow logs</Fit>
        <div className="mt-px flex h-[24px] shrink-0 flex-col text-[#75787c]">
          <Fit className="h-[12px] w-[300px] leading-[13px]">Turning on VPC flow logs doesn't affect performance, but some systems generate a large</Fit>
          <span className="flex h-[12px] leading-[12px]"><Fit className="w-[200px]">number of logs, which can increase costs in Cloud Logging.</Fit><Fit className="ml-[2px] h-[12px] w-[39px] border-b border-[#5f80cf] text-[#3d62bd]">Learn more</Fit></span>
        </div>
        <Radio text="On" w="w-[11px]" />
        <Radio text="Off" w="w-[12px]" on />
        <div className="mt-[37px] flex h-[17px] items-center justify-end pr-[3px] font-medium">
          <Fit className="w-[31px] text-[#1d1e21]">CANCEL</Fit><Fit className="ml-[21px] w-[16px] text-[#3361cd]">ADD</Fit>
        </div>
      </div>
      <div className="mt-[46px] mr-px ml-auto w-[6px] bg-[#c9c8cb]" />
      <svg viewBox="0 0 8 12" className="absolute top-[456px] left-[334px] h-[11px] w-[8px]" fill="#fff" stroke="#222" strokeWidth=".8"><path d="M.5.500v9l2.200-1.800L4.200 11l1.300-.6L4.200 7.300H7z" /></svg>
    </div>
  );
}

/* ---------- taskbars ---------- */
const Slot = ({ w = "w-[26.200px]", on = false, run = false, children }: { w?: string; on?: boolean; run?: boolean; children: React.ReactNode }) => (
  <span className={`relative flex h-full shrink-0 items-center justify-center ${w} ${on ? "bg-[#4a4a50]" : ""}`}>
    {children}
    {run && <i className={`absolute bottom-0 h-[2px] bg-[#7aa7e6] ${on ? "inset-x-0" : "right-[3px] left-[3px]"}`} />}
  </span>
);

function SharedTaskbar() {
  return (
    <div className={`flex h-[28px] items-center bg-[#1d1e26] text-white ${UI}`}>
      <span className="flex h-full w-[34px] shrink-0 items-center justify-center bg-[#1b2230]"><WinLogo className="h-[12px] w-[12px]" /></span>
      <div className="flex h-full w-[242px] shrink-0 items-center bg-[#f2f2f2] pl-[8px] text-[#444]">
        <Magnifier className="h-[12px] w-[12px]" />
        <Fit className="ml-[8px] w-[92px] text-[10.800px]">Type here to search</Fit>
      </div>
      <span className="ml-[12px] h-[11px] w-[11px] shrink-0 rounded-full border-[1.500px] border-white" />
      <TaskView className="ml-[22px] h-[11px] w-[12px] text-[#bbb]" />
      <span className="ml-[13px] flex h-full shrink-0 items-center">
        <Slot><Store className="h-[17px] w-[16px]" /></Slot>
        <Slot><svg viewBox="0 0 24 24" className="h-[17px] w-[17px]"><circle cx="12" cy="12" r="12" fill="#1b7fd0" /><path d="M1 9C4 0 21-2 24 11c0 5-6 6-8 4 2-3-1-7-6-7-4 0-7 2-9 1z" fill="#45d08a" /><path d="M1 9c6-4 12-1 10 2-3 5 2 10 10 8A12 12 0 0 1 1 9z" fill="#1565b5" /></svg></Slot>
        <Slot run><Folder className="h-[14px] w-[16px]" /></Slot>
        <Slot><span className="flex h-[17px] w-[17px] items-center justify-center bg-[#2ba8de] text-[14px] leading-none font-bold">L</span></Slot>
        <Slot><Mail className="h-[16px] w-[17px]" /></Slot>
        <Slot><svg viewBox="0 0 16 16" className="h-[16px] w-[15px]"><path d="m0 0 8 4 8-4v12l-8 4-8-4z" fill="#c8202f" /><path d="M3.500 5 8 7.200 12.500 5v6.500L8 13l-4.500-1.500z" fill="#1d1e26" /></svg></Slot>
        <Slot run><Office letter="X" color="x" className="h-[16px] w-[16px] text-[12px]" /></Slot>
        <Slot on run><Chrome className="h-[17px] w-[17px]" /></Slot>
        <Slot run><Office letter="P" color="p" className="h-[16px] w-[16px] text-[12px]" /></Slot>
        <Slot run><svg viewBox="0 0 16 16" className="h-[16px] w-[16px]"><ellipse cx="7.500" cy="5" rx="7" ry="4.500" fill="#e9e9ea" /><path d="m8 8 5-5" stroke="#d33" strokeWidth="2" /><circle cx="9" cy="13" r="2" fill="none" stroke="#2f88d8" strokeWidth="1.300" /><circle cx="13.500" cy="11" r="2" fill="none" stroke="#2f88d8" strokeWidth="1.300" /></svg></Slot>
        <Slot run><ZoomLogo className="h-[16px] w-[16px]" /></Slot>
        <Slot run><svg viewBox="0 0 16 16" className="h-[15px] w-[15px]"><path d="M5 1h10l-2.500 13L1 13z" fill="#8ecbd0" /><path d="M5 1h10l-.5 2.500-10-.5z" fill="#dfe9ea" /><path d="M12.500 14 15 1l1 12z" fill="#4d8b93" /></svg></Slot>
      </span>
      <div className="ml-[5px] flex w-[51px] shrink-0 flex-col text-[7.500px] leading-[9.500px]">
        <span className="flex justify-between"><span>U:</span><Fit className="w-[27px]">--- MB/s</Fit></span>
        <span className="flex justify-between"><span>D:</span><Fit className="w-[27px]">--- MB/s</Fit></span>
      </div>
      <div className="ml-[3px] flex h-[14px] w-[34px] shrink-0 items-center justify-center border border-white bg-[#1c9a4b] pr-[2px]"><Fit className="w-[20px] text-[9px] leading-none">91%</Fit></div>
      <span className="h-[6px] w-[2px] shrink-0 bg-white" />
      <Weather className="ml-[30px] h-[12px] w-[16px]" />
      <Fit className="ml-[6px] w-[22px] text-[10px]">23°C</Fit>
      <ChevUp className="ml-[11px] h-[6px] w-[9px]" />
      <Speaker className="ml-[6px] h-[9px] w-[12px]" />
      <svg viewBox="0 0 12 12" className="ml-[7px] h-[10px] w-[9px] shrink-0" fill="none" stroke="#ccc" strokeWidth="1.200"><path d="M3 1h6M1 3.500h8v5H1zM9 5h2v3H9M3 11h6" /></svg>
      <svg viewBox="0 0 12 9" className="ml-[7px] h-[9px] w-[11px] shrink-0"><path d="M3 8a2.500 2.500 0 0 1 0-5 3.500 3.500 0 0 1 6.500 1A2 2 0 0 1 9.500 8z" fill="#aaa" /><path d="m.5.500 11 8" stroke="#ddd" /></svg>
      <Wifi className="ml-[8px] h-[9px] w-[9px]" />
      <span className="ml-[6px] h-[6px] w-[10px] shrink-0 border border-white bg-[#ddd]" />
      <span className="h-[3px] w-px shrink-0 bg-white" />
      <svg viewBox="0 0 12 12" className="ml-[5px] h-[12px] w-[12px] shrink-0" fill="none"><path d="M1 2h10v8H1z" stroke="#ddd" /><path d="M8 4C5 3 3 5 4 7s3 1 4 0" stroke="#ddd" /><circle cx="9.500" cy="9.500" r="2.500" fill="#f59a23" /></svg>
      <svg viewBox="0 0 12 12" className="ml-[5px] h-[11px] w-[11px] shrink-0"><path d="M3 1 6 3 3 5 0 3zM9 1l3 2-3 2-3-2zM9 5l3 2-3 2-3-2z" fill="#eee" /><rect x="0" y="5" width="7" height="7" rx="1" fill="#d5203a" /><path d="M2.500 6.500h2v4h-2M2.500 8.500h2" stroke="#fff" fill="none" strokeWidth=".8" /></svg>
      <div className="ml-[8px] flex w-[17px] shrink-0 flex-col items-center text-[8.500px] leading-[12.500px]"><Fit className="w-[17px]">ENG</Fit><span>IN</span></div>
      <div className="ml-[5px] flex w-[43px] shrink-0 flex-col items-center text-[8.500px] leading-[12.500px]"><Fit className="w-[35px]">11:04 AM</Fit><Fit className="w-[42px]">11/16/2021</Fit></div>
      <span className="relative ml-[10px] flex shrink-0"><Note className="h-[12px] w-[12px]" /><i className="absolute top-[4px] left-[6px] flex h-[11px] w-[11px] items-center justify-center rounded-full border border-[#888] bg-[#2c2d33] text-[8px] leading-none not-italic">1</i></span>
    </div>
  );
}

function HostTaskbar() {
  return (
    <div className={`flex h-[40px] shrink-0 items-center bg-[#1b1b1b] text-white ${UI}`}>
      <WinLogo className="ml-[16px] h-[16px] w-[16px]" />
      <div className="ml-[16px] flex h-[40px] w-[344px] shrink-0 items-center border border-[#6d6d6d] bg-[#464646] pl-[11px] text-[#e4e4e4]">
        <Magnifier className="h-[16px] w-[16px]" />
        <Fit className="ml-[12px] w-[128px] text-[14.500px]">Type here to search</Fit>
      </div>
      <span className="ml-[16px] h-[15px] w-[15px] shrink-0 rounded-full border-2 border-white" />
      <TaskView className="ml-[33px] h-[15px] w-[16px] text-white" />
      <span className="ml-[18px] flex h-full shrink-0 items-center">
        <Slot w="w-[49px]"><Chrome className="h-[24px] w-[24px]" /></Slot>
        <Slot w="w-[49px]"><Store className="h-[24px] w-[23px]" /></Slot>
        <Slot w="w-[49px]"><Mail className="h-[22px] w-[24px]" /></Slot>
        <Slot w="w-[48px]"><Office letter="W" color="w" className="h-[22px] w-[22px] text-[16px]" /></Slot>
        <Slot w="w-[49px]"><Office letter="P" color="p" className="h-[22px] w-[22px] text-[18px]" /></Slot>
        <Slot w="w-[50px]"><svg viewBox="0 0 24 24" className="h-[22px] w-[22px]"><circle cx="12" cy="12" r="12" fill="#e0142a" /><ellipse cx="12" cy="12" rx="5" ry="8.800" fill="#1b1b1b" /></svg></Slot>
        <span className="relative flex h-full w-[49px] items-center justify-center"><Folder className="h-[19px] w-[23px]" /><i className="absolute right-[4px] bottom-0 left-[5px] h-[2px] bg-[#b9b5b0]" /></span>
        <span className="relative flex h-full w-[48px] items-center justify-center bg-[#3b3835]"><ZoomLogo className="h-[23px] w-[23px]" /><i className="absolute inset-x-0 bottom-0 h-[2px] bg-[#b9b5b0]" /></span>
        <span className="relative flex h-full w-[50px] items-center justify-center"><Office letter="X" color="x" className="h-[22px] w-[22px] text-[18px]" /><i className="absolute right-[4px] bottom-0 left-[5px] h-[2px] bg-[#b9b5b0]" /></span>
        <span className="relative flex h-full w-[50px] items-center justify-center"><Chrome badge className="h-[24px] w-[24px]" /><i className="absolute right-[5px] bottom-0 left-[5px] h-[2px] bg-[#b9b5b0]" /></span>
      </span>
      <Weather className="ml-[65px] h-[16px] w-[21px]" />
      <Fit className="ml-[10px] w-[28px] text-[13px]">28°C</Fit>
      <ChevUp className="ml-[18px] h-[7px] w-[13px]" />
      <Wifi className="ml-[13px] h-[12px] w-[12px]" />
      <svg viewBox="0 0 17 12" className="ml-[9px] h-[12px] w-[16px] shrink-0" fill="none" stroke="#fff"><path d="M4.500 4.500h10v6h-9M14.500 6h2v3h-2M1 0v2M4 0v2M.5 2.500h4v2l-2 1.500-2-1.500zM2.500 6v5.500" /><path d="M7 6h5v3H7z" fill="#fff" /></svg>
      <Speaker className="ml-[8px] h-[12px] w-[17px]" />
      <Fit className="ml-[9px] w-[23px] text-[11.800px]">ENG</Fit>
      <div className="ml-[9px] flex w-[58px] shrink-0 flex-col items-center text-[11.500px] leading-[18px]"><Fit className="w-[49px]">11:04 AM</Fit><Fit className="w-[57px]">11/16/2021</Fit></div>
      <span className="relative ml-[14px] flex shrink-0"><Note className="h-[16px] w-[16px]" /><i className="absolute top-[9px] left-[9px] h-[7px] w-[7px] rounded-full border border-white bg-[#1b1b1b]" /></span>
      <span className="ml-[19px] h-full w-px shrink-0 bg-[#6a6a6a]" />
    </div>
  );
}

export default function App() {
  return (
    <div className={`relative flex h-[768px] w-[1366px] flex-col overflow-hidden bg-[#1a1a1a] ${UI}`}>
      <div className="flex h-[23px] shrink-0 items-center bg-white pl-[3px] text-black">
        <ZoomLogo className="h-[14px] w-[14px]" />
        <Fit className="ml-[6px] w-[79px] text-[11.800px]">Zoom Meeting</Fit>
        <span className="mb-px ml-auto h-px w-[10px] bg-black" />
        <Restore className="mb-[3px] ml-[35px] h-[10px] w-[10px]" />
        <X className="mr-[20px] mb-[3px] ml-[36px] h-[10px] w-[10px]" />
      </div>
      <div className="flex h-[96px] shrink-0 gap-[3px] pt-[2px] pl-[195px]">
        <Tile video label="198624-Meghana" labelW="w-[102px]" />
        <Tile name="172484-Anudee…" nameW="w-[129px]" label="172484-Anudeep Red..." labelW="w-[134px]" />
        <Tile name="199212-Vipina K" nameW="w-[118px]" label="199212-Vipina K" labelW="w-[95px]" />
        <Tile name="198635-K Keert..." nameW="w-[126px]" label="198635-K Keerthana" labelW="w-[118px]" />
        <Tile active name="198640-Amruth..." nameW="w-[129px]" label="198640-Amrutha S" labelW="w-[107px]" />
        <Tile muted={false} name="Trainer" nameW="w-[50px]" label="Trainer" labelW="w-[41px]" />
        <span className="mt-[30px] ml-[11px] flex h-[32px] w-[32px] shrink-0 items-center justify-center rounded-full border-[3px] border-white bg-[#0e71eb]">
          <svg viewBox="0 0 8 14" className="ml-[2px] h-[13px] w-[8px]" fill="none" stroke="#fff" strokeWidth="1.800"><path d="m1 1 6 6-6 6" /></svg>
        </span>
      </div>
      <div className="flex h-[609px] shrink-0">
        <div className="flex w-[141px] shrink-0 items-center gap-[5px] self-start pt-[11px] pl-[13.500px]">
          <span className="flex h-[13px] w-[13px] shrink-0 items-start justify-center rounded-full bg-gradient-to-b from-[#b5443b] to-[#d9534a] pt-[3px]"><i className="h-[4px] w-[7px] rounded-full bg-[#f0b8b2]" /></span>
          <Fit className="w-[53px] text-[11.500px] leading-[18px] text-[#e8e8e8]">Recording</Fit>
        </div>
        <div className="flex w-[1083px] shrink-0 flex-col">
          <Browser />
          <div className="h-[508px]"><Console /></div>
          <SharedTaskbar />
        </div>
      </div>
      <HostTaskbar />
      <div className="absolute top-[651px] left-[1073px] flex flex-col text-[rgba(160,160,160,.68)]">
        <Fit className="w-[156px] text-[17px] leading-[24px]">Activate Windows</Fit>
        <Fit className="w-[236px] text-[13.500px] leading-[20px]">Go to Settings to activate Windows.</Fit>
      </div>
    </div>
  );
}
